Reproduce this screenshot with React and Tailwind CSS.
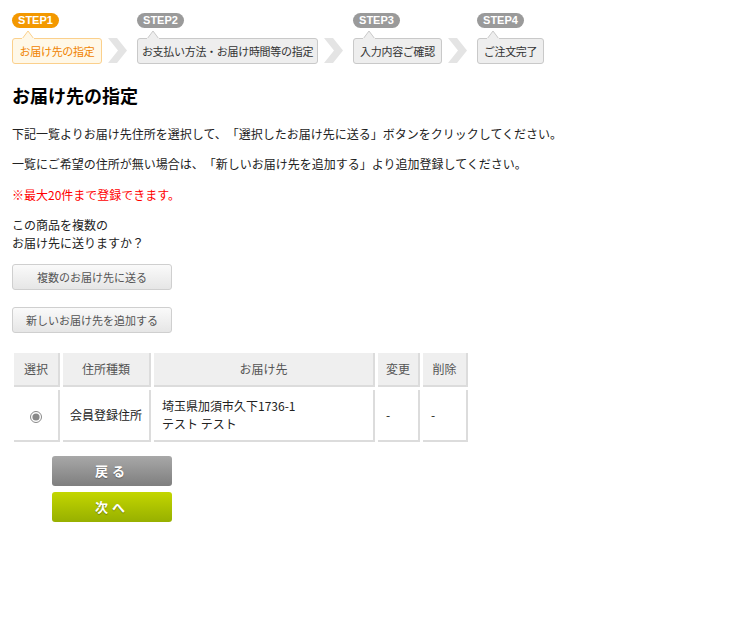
import { useState } from "react";

const steps = [
  { no: "STEP1", label: "お届け先の指定", w: "w-[90px]", active: true },
  { no: "STEP2", label: "お支払い方法・お届け時間等の指定", w: "w-[181px]" },
  { no: "STEP3", label: "入力内容ご確認", w: "w-[89px]" },
  { no: "STEP4", label: "ご注文完了", w: "w-[67px]" },
];

function Chevron() {
  return (
    <svg width="20" height="26" viewBox="0 0 20 26" className="mt-[25px] ml-[6px] mr-[9px]">
      <polygon points="0,0 9,0 19,12.5 9,25 0,25 10,12.5" fill="#e4e4e4" />
    </svg>
  );
}

function Step({ step }) {
  const on = step.active;
  return (
    <div className="flex flex-col items-start">
      <span
        className={`h-[15px] w-[47px] rounded-full text-white text-[11px] font-bold leading-[15px] text-center ${on ? "bg-[#f39800]" : "bg-[#9a9a9a]"}`}
        style={{ fontFamily: "'Liberation Sans', Arial, sans-serif" }}
      >
        {step.no}
      </span>
      <div className="relative mt-[10px]">
        <svg width="12" height="8" viewBox="0 0 12 8" className="absolute -top-[7px] left-[10px]">
          <polygon points="0,8 6,0 12,8" fill={on ? "#fff8e8" : "#eeeeee"} stroke={on ? "#fbd08c" : "#c9c9c9"} />
          <rect x="0" y="7" width="12" height="2" fill={on ? "#fff8e8" : "#eeeeee"} />
        </svg>
        <div
          className={`${step.w} h-[26px] rounded-[3px] border text-[11px] leading-[24px] text-center whitespace-nowrap tracking-[-0.3px] ${on ? "border-[#fbd08c] bg-[#fff8e8] text-[#f08300]" : "border-[#c9c9c9] bg-[#eeeeee] text-[#333]"}`}
        >
          {step.label}
        </div>
      </div>
    </div>
  );
}

export default function App() {
  const [selected, setSelected] = useState(0);

  return (
    <div
      className="w-[739px] h-[625px] bg-white text-[#222] px-[12px] pt-[13px] [text-spacing-trim:space-all]"
      style={{ fontFamily: "'Noto Sans CJK JP', 'Noto Sans', sans-serif" }}
    >
      {/* ステップ表示 */}
      <div className="flex items-start">
        {steps.map((s, i) => (
          <div key={s.no} className="flex items-start">
            <Step step={s} />
            {i < steps.length - 1 && <Chevron />}
          </div>
        ))}
      </div>

      <h2 className="mt-[19px] text-[18px] font-bold leading-[24px] text-black">お届け先の指定</h2>

      <div className="text-[12px] leading-[18px] mt-[18px]">
        <p>下記一覧よりお届け先住所を選択して、「選択したお届け先に送る」ボタンをクリックしてください。</p>
        <p className="mt-[12px]">一覧にご希望の住所が無い場合は、「新しいお届け先を追加する」より追加登録してください。</p>
        <p className="mt-[13px] text-[#ff0000]">※最大20件まで登録できます。</p>
        <p className="mt-[12px]">この商品を複数の<br />お届け先に送りますか？</p>
      </div>

      <button className="mt-[12px] block w-[160px] h-[26px] rounded-[3px] border border-[#cfcfcf] bg-gradient-to-b from-[#fafafa] to-[#e6e6e6] text-[11px] text-[#555]">
        複数のお届け先に送る
      </button>
      <button className="mt-[17px] block w-[160px] h-[26px] rounded-[3px] border border-[#cfcfcf] bg-gradient-to-b from-[#fafafa] to-[#e6e6e6] text-[11px] text-[#555]">
        新しいお届け先を追加する
      </button>

      {/* お届け先一覧 */}
      <table className="mt-[17px] -ml-[1px] border-separate border-spacing-[3px] text-[12px]">
        <thead>
          <tr className="h-[34px]">
            <th className="w-[46px] font-normal bg-[#efefef] border-r-2 border-b-2 border-[#dcdcdc] text-[#555]">選択</th>
            <th className="w-[88px] font-normal bg-[#efefef] border-r-2 border-b-2 border-[#dcdcdc] text-[#555]">住所種類</th>
            <th className="w-[221px] font-normal bg-[#efefef] border-r-2 border-b-2 border-[#dcdcdc] text-[#555]">お届け先</th>
            <th className="w-[42px] font-normal bg-[#efefef] border-r-2 border-b-2 border-[#dcdcdc] text-[#555]">変更</th>
            <th className="w-[45px] font-normal bg-[#efefef] border-r-2 border-b-2 border-[#dcdcdc] text-[#555]">削除</th>
          </tr>
        </thead>
        <tbody>
          <tr className="h-[52px]">
            <td className="text-center border-r-2 border-b-2 border-[#dcdcdc]">
              <input
                type="radio"
                checked={selected === 0}
                onChange={() => setSelected(0)}
                className="w-[12px] h-[12px] align-middle accent-[#888]"
              />
            </td>
            <td className="text-center border-r-2 border-b-2 border-[#dcdcdc]">会員登録住所</td>
            <td className="px-[8px] leading-[18px] border-r-2 border-b-2 border-[#dcdcdc]">
              埼玉県加須市久下1736-1<br />テスト テスト
            </td>
            <td className="px-[8px] border-r-2 border-b-2 border-[#dcdcdc]">-</td>
            <td className="px-[8px] border-r-2 border-b-2 border-[#dcdcdc]">-</td>
          </tr>
        </tbody>
      </table>

      <div className="ml-[40px] mt-[11px] flex flex-col gap-[6px]">
        <button className="w-[120px] h-[30px] rounded-[3px] bg-gradient-to-b from-[#a8a8a8] to-[#7f7f7f] text-white text-[13px] font-bold tracking-[4px] [text-shadow:0_1px_1px_rgba(0,0,0,0.3)]">
          戻る
        </button>
        <button className="w-[120px] h-[30px] rounded-[3px] bg-gradient-to-b from-[#c3d600] to-[#97b000] text-white text-[13px] font-bold tracking-[4px] [text-shadow:0_1px_1px_rgba(0,0,0,0.3)]">
          次へ
        </button>
      </div>
    </div>
  );
}
